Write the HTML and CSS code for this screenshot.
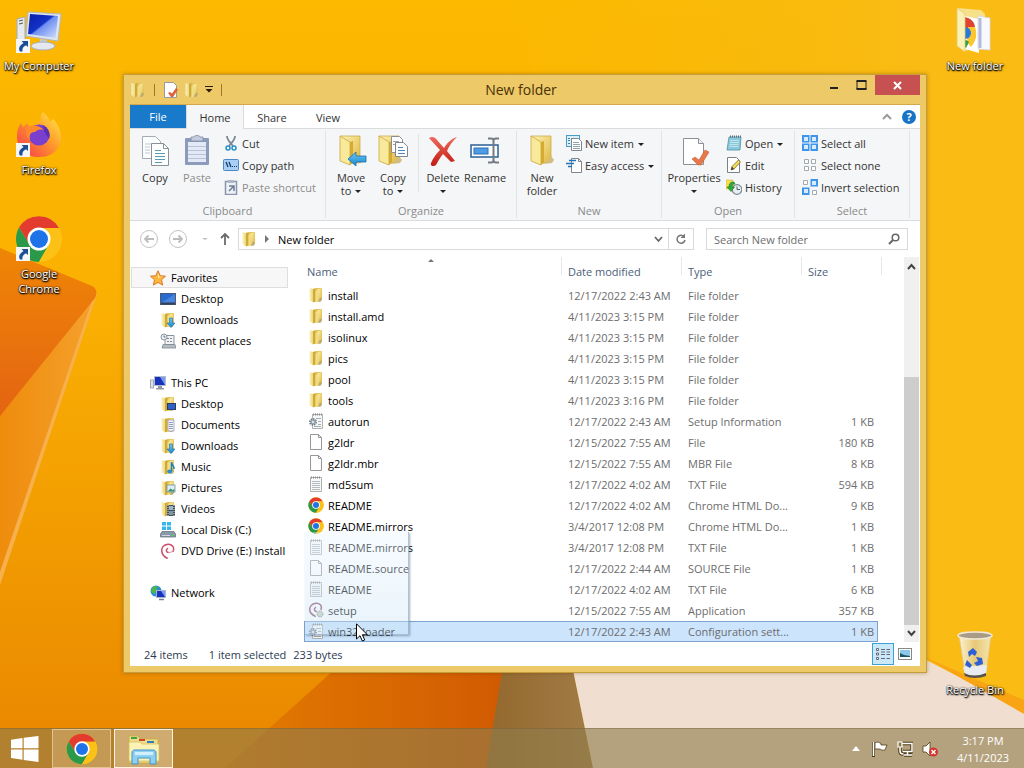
FILE: index.html
```html
<!DOCTYPE html>
<html lang="en">
<head>
  <meta charset="UTF-8">
  <title>New folder</title>
  <link rel="stylesheet" href="styles.css">
</head>
<body>

<!-- icon library -->
<svg class="defs" width="0" height="0" aria-hidden="true">
  <defs>
    <linearGradient id="gFolder" x1="0" y1="0" x2="1" y2="1">
      <stop offset="0" stop-color="#fdf3b8"/><stop offset="1" stop-color="#e0b73e"/>
    </linearGradient>
    <linearGradient id="gFront" x1="0" y1="0" x2="1" y2="0">
      <stop offset="0" stop-color="#fbf3bf"/><stop offset="1" stop-color="#ecd77a"/>
    </linearGradient>
    <linearGradient id="gScreen" x1="0" y1="0" x2="1" y2="1">
      <stop offset="0" stop-color="#0a1fa8"/><stop offset=".45" stop-color="#1232c8"/><stop offset=".5" stop-color="#6f8ff0"/><stop offset="1" stop-color="#d4e0ff"/>
    </linearGradient>
    <linearGradient id="gFox" x1="1" y1="0" x2="0" y2="1">
      <stop offset="0" stop-color="#fff04a"/><stop offset=".45" stop-color="#ff9a2a"/><stop offset="1" stop-color="#f5304e"/>
    </linearGradient>
    <linearGradient id="gArrow" x1="0" y1="0" x2="0" y2="1">
      <stop offset="0" stop-color="#6cc8f5"/><stop offset="1" stop-color="#1786cf"/>
    </linearGradient>
    <linearGradient id="gBin" x1="0" y1="0" x2="1" y2="0">
      <stop offset="0" stop-color="#fdf2cf"/><stop offset=".5" stop-color="#e6c877"/><stop offset="1" stop-color="#f6e3b0"/>
    </linearGradient>
    <linearGradient id="gDel" x1="0" y1="0" x2="0" y2="1">
      <stop offset="0" stop-color="#ee6a5c"/><stop offset="1" stop-color="#c01c14"/>
    </linearGradient>
  </defs>

  <symbol id="folder" viewBox="0 0 16 16">
    <path d="M6 3l2-2h6v12l-5 2H6z" fill="#e6c557"/>
    <path d="M9.500 2.500L13.500 1v11l-4 2z" fill="url(#gFolder)"/>
    <path d="M1.500 1L5 2v13.500L1.500 13z" fill="url(#gFront)"/>
    <path d="M5 2l2.500-1v13L5 15.500z" fill="#cfa93a"/>
    <path d="M7.500 4l2-1v12h-2z" fill="#f3df83"/>
    <path d="M12 10.500l2 1-1 3-3 .5z" fill="#b9aa78"/>
  </symbol>

  <symbol id="folder-big" viewBox="0 0 32 32">
    <path d="M5 2h20v26l-8 1z" fill="url(#gFolder)" stroke="#c5a33a" stroke-width=".7"/>
    <path d="M5 2l10 6v23L5 27z" fill="#f9e99a" stroke="#c9a83f" stroke-width=".8"/>
    <path d="M15 8l3-1v22l-3 2z" fill="#d5ab2f"/>
    <path d="M25 22l3 4-2 3-8 1z" fill="#d2bd7c"/>
  </symbol>

  <symbol id="page" viewBox="0 0 16 16">
    <path d="M2.500.5h8l3 3v12h-11z" fill="#fff" stroke="#979797"/>
    <path d="M10.500.5v3h3" fill="none" stroke="#979797"/>
  </symbol>

  <symbol id="txt" viewBox="0 0 16 16">
    <path d="M2.500 1.500h11v14h-11z" fill="#f7f8f8" stroke="#b0b0b0"/>
    <path d="M4 5.500h8M4 7.500h8M4 9.500h8M4 11.500h8M4 13.500h8" stroke="#b5bcc0"/>
    <path d="M3 1.500h10" stroke="#888" stroke-dasharray="1 1" stroke-width="2"/>
  </symbol>

  <symbol id="inf" viewBox="0 0 16 16">
    <path d="M4.500 1.500h10v14h-10z" fill="#f7f8f8" stroke="#b0b0b0"/>
    <path d="M5 1.500h9" stroke="#888" stroke-dasharray="1 1" stroke-width="2"/>
    <path d="M8 5.500h5M10 8.500h3M10 11.500h3M6 13.500h7" stroke="#a5adb3"/>
    <circle cx="5" cy="9" r="3" fill="#e4e8ea" stroke="#71808b" stroke-width="2" stroke-dasharray="1.400 .9"/>
    <circle cx="5" cy="9" r="2" fill="#dde2e5" stroke="#7c8993"/>
  </symbol>

  <symbol id="chrome" viewBox="0 0 48 48">
    <circle cx="24" cy="24" r="23" fill="#fbc116"/>
    <path d="M24 13h20A23 23 0 0 0 4 12.600L14.500 30z" fill="#e33b2e"/>
    <path d="M4 12.600A23 23 0 0 0 24 47l10-17.500-10 5.500-9.500-5.500z" fill="#2a9a4a"/>
    <path d="M24 47a23 23 0 0 0 20-34H24l10 16.500z" fill="#fbc116"/>
    <circle cx="24" cy="24" r="11.500" fill="#fff"/>
    <circle cx="24" cy="24" r="9" fill="#1f73e8"/>
  </symbol>

  <symbol id="debian" viewBox="0 0 16 16">
    <path d="M8.500 9.500C6.500 9.500 5.500 7 7.500 5.500M13 8.500c2-4-1-7.500-5-7.300C3.500 1.500 1.200 5 1.800 8.500c.5 3 2.700 5.500 5.400 6.700" fill="none" stroke="#c9506e" stroke-width="1.500" stroke-linecap="round"/>
    <path d="M8.500 9.500c2 0 4-.5 4.800-2" fill="none" stroke="#d98ba0" stroke-linecap="round"/>
  </symbol>

  <symbol id="debian-app" viewBox="0 0 16 16">
    <path d="M8.500 9.500C6.500 9.500 5.500 7 7.500 5.500M13 7.500c1.500-4-1.500-6.500-5-6.300C3.500 1.500 1.200 5 1.800 8.500c.5 3 2.700 4.500 5.400 5.700" fill="none" stroke="#94506c" stroke-width="1.500" stroke-linecap="round"/>
    <circle cx="12" cy="12" r="3" fill="#c9cfb4" stroke="#7d8b8b" stroke-dasharray="1.500 1"/>
  </symbol>

  <symbol id="star" viewBox="0 0 16 16">
    <path d="M8 .8l2.200 4.900 5.300.5-4 3.600 1.200 5.300L8 12.400l-4.700 2.700 1.200-5.300-4-3.600 5.300-.5z" fill="#fdb83c" stroke="#d9762a"/>
    <path d="M8 3l1.400 3.400 3 .4L8 8z" fill="#fee6a0"/>
  </symbol>

  <symbol id="desk" viewBox="0 0 16 16">
    <rect x=".5" y="2.500" width="15" height="11" fill="#2a6bd0" stroke="#4a5a78"/>
    <path d="M1 12L15 3v9z" fill="#5b97ea" opacity=".6"/>
    <path d="M1 12.500h14" stroke="#33415c" stroke-width="2"/>
  </symbol>

  <symbol id="f-down" viewBox="0 0 16 16">
    <use href="#folder" width="16" height="16"/>
    <path d="M9.500 6h3v5H15l-4 4.500L7 11h2.500z" fill="url(#gArrow)" stroke="#1a6fae" stroke-width=".6"/>
  </symbol>
  <symbol id="f-desk" viewBox="0 0 16 16">
    <use href="#folder" width="16" height="16"/>
    <rect x="7.500" y="7.500" width="8" height="6" fill="#2d62c8" stroke="#2b3b62"/>
  </symbol>
  <symbol id="f-docs" viewBox="0 0 16 16">
    <use href="#folder" width="16" height="16"/>
    <path d="M8 3h6v11H8z" fill="#f5f6fa" stroke="#8e94ac" stroke-width=".7"/>
    <path d="M9 5.500h4M9 7.500h4M9 9.500h4M9 11.500h4" stroke="#7882ad" stroke-width=".8"/>
  </symbol>
  <symbol id="f-music" viewBox="0 0 16 16">
    <use href="#folder" width="16" height="16"/>
    <path d="M11.500 12V3c0 3 3 3 2.500 7" fill="none" stroke="#1e7fbd" stroke-width="1.500"/>
    <ellipse cx="9.500" cy="12.500" rx="2.300" ry="2" fill="#2a90cc"/>
  </symbol>
  <symbol id="f-pics" viewBox="0 0 16 16">
    <use href="#folder" width="16" height="16"/>
    <rect x="7" y="5" width="8" height="7" fill="#d9eef5" stroke="#7a8d94" stroke-width=".8"/>
    <path d="M7.500 11.500l3-3 2 1.500 2-1v2.500z" fill="#3f8f72"/>
  </symbol>
  <symbol id="f-video" viewBox="0 0 16 16">
    <use href="#folder" width="16" height="16"/>
    <rect x="7" y="4" width="8" height="11" fill="#42505a"/>
    <rect x="9" y="5" width="4" height="4" fill="#9fb4c2"/><rect x="9" y="10" width="4" height="4" fill="#7d97a8"/>
    <path d="M8 4v11M14 4v11" stroke="#dfe4e6" stroke-dasharray="1 1"/>
  </symbol>

  <symbol id="recent" viewBox="0 0 16 16">
    <path d="M5 2.500h9v9H5z" fill="#f1f3f5" stroke="#88929c"/>
    <path d="M7 5.500h5M7 8.500h5" stroke="#7d8791" stroke-dasharray="2 1"/>
    <circle cx="4" cy="4" r="3" fill="#e8edf1" stroke="#8b97a3"/><path d="M4 2.500V4h1.500" stroke="#55606b" fill="none" stroke-width=".8"/>
    <path d="M3 11.500h12l1 3.500H2z" fill="#b5bcc4" stroke="#7f8992" stroke-width=".8"/>
  </symbol>

  <symbol id="pc" viewBox="0 0 16 16">
    <rect x=".5" y="5" width="3" height="8" fill="#dde1e8" stroke="#8e96a5" stroke-width=".8"/>
    <rect x="4.500" y="1.500" width="11" height="9" fill="#1733bd" stroke="#b4bccd"/>
    <path d="M10 2h5v8z" fill="#7c9af2"/>
    <path d="M8 11h4v2h2v1.500H6V13h2z" fill="#8f97a8"/>
  </symbol>

  <symbol id="disk" viewBox="0 0 16 16">
    <path d="M2 0h4v3.500H2zM7 0h4v3.500H7zM2 4.500h4V8H2zM7 4.500h4V8H7z" fill="#35b6ee"/>
    <path d="M2 9.500h12l1.500 2.500v3H.5v-3z" fill="#8a99a8" stroke="#5c6a78" stroke-width=".7"/>
    <path d="M2 13.500h8" stroke="#cfd7de"/><circle cx="13" cy="13.500" r="1" fill="#4cd053"/>
  </symbol>

  <symbol id="network" viewBox="0 0 16 16">
    <circle cx="6" cy="6" r="5.500" fill="#2a8fd0"/>
    <path d="M2 3c2-2 5-2 6-1L6 4l1 2-3 3-3-3z" fill="#4fb54c"/>
    <rect x="6.500" y="5.500" width="9" height="7" fill="#1733bd" stroke="#aab5cb"/>
    <path d="M11 6h4v6z" fill="#7c9af2"/><path d="M9 14.500h5" stroke="#76829a" stroke-width="1.500"/>
  </symbol>

  <!-- ribbon -->
  <symbol id="copy-big" viewBox="0 0 32 32">
    <path d="M3.500 2.500h13l5 5v17h-18z" fill="#fbfcfd" stroke="#a5abb0"/>
    <path d="M6 10h8M6 13h5M6 16h5M6 19h5" stroke="#c3cad0"/>
    <path d="M12.500 9.500h12l5 5v17h-17z" fill="#fff" stroke="#888f95"/>
    <path d="M24.500 9.500v5h5" fill="none" stroke="#888f95"/>
    <path d="M16 16.500h6M16 19.500h10M16 22.500h10M16 25.500h10M16 28.500h7" stroke="#5a99b5"/>
  </symbol>

  <symbol id="paste-big" viewBox="0 0 32 32">
    <rect x="4" y="4" width="24" height="27" rx="1" fill="#8d9bbb"/>
    <rect x="7" y="8" width="18" height="20" fill="#e3e9f5"/>
    <path d="M7 12.500h18M7 16.500h18M7 20.500h18M7 24.500h18" stroke="#b8c3da"/>
    <path d="M10 3h3c0-2 6-2 6 0h3v4H10z" fill="#c4cbda" stroke="#7f8ca8" stroke-width=".8"/>
  </symbol>

  <symbol id="move-big" viewBox="0 0 32 32">
    <use href="#folder-big" width="32" height="32"/>
    <path d="M13 25l8-7v4h10v6H21v4z" fill="url(#gArrow)" stroke="#1a6fae" stroke-width=".8"/>
  </symbol>

  <symbol id="copyto-big" viewBox="0 0 32 32">
    <use href="#folder-big" x="-3" width="32" height="32"/>
    <path d="M14.500 2.500h8l3 3v13h-11z" fill="#fff" stroke="#8a9096"/>
    <path d="M16 7.500h6M16 10.500h4" stroke="#9aa8b4"/>
    <path d="M18.500 8.500h8l4 4v10h-12z" fill="#fff" stroke="#7f868c"/>
    <path d="M21 13.500h5M21 16.500h7M21 19.500h7" stroke="#4a88c0"/>
  </symbol>

  <symbol id="delete-big" viewBox="0 0 32 32">
    <path d="M2 4c3-2 6-1 8 2l7 8c3-5 7-9 13-11-5 5-8 9-10 14l8 10-4 1-8-8c-3 4-5 7-7 11-3 2-6 1-5-2 2-5 5-9 9-13z" fill="url(#gDel)"/>
  </symbol>

  <symbol id="rename-big" viewBox="0 0 32 32">
    <rect x="2" y="11" width="27" height="12" fill="#fff" stroke="#2a5f94" stroke-width="1.500"/>
    <rect x="5" y="14" width="14" height="6" fill="#4f9be4" stroke="#2b70b8"/>
    <path d="M19 4.500h3c2 0 2.500.5 2.500 2V26c0 2-1 2.500-2.500 2.500h-3M30 4.500h-3c-2 0-2.500.5-2.500 2V26c0 2 1 2.500 2.500 2.500h3" fill="none" stroke="#747b83" stroke-width="2"/>
  </symbol>

  <symbol id="props-big" viewBox="0 0 32 32">
    <path d="M5.500 4.500h15l5 5v21h-20z" fill="#fff" stroke="#8a9096"/>
    <path d="M20.500 4.500v5h5" fill="#eef0f2" stroke="#8a9096"/>
    <path d="M14 25l3-2 4 3 6-10 4 2-8 13h-3z" fill="#e5794b" stroke="#cf5f35" stroke-width=".6"/>
  </symbol>

  <symbol id="cut" viewBox="0 0 16 16">
    <path d="M4 1c0 4 3 6 6 10M12 1c0 4-3 6-6 10" fill="none" stroke="#7d8894" stroke-width="1.800"/>
    <circle cx="5" cy="13" r="2" fill="none" stroke="#2791c7" stroke-width="1.500"/>
    <circle cx="11" cy="13" r="2" fill="none" stroke="#2791c7" stroke-width="1.500"/>
  </symbol>

  <symbol id="copypath" viewBox="0 0 16 16">
    <rect x=".5" y="2.500" width="15" height="11" rx="1" fill="#a9cff5" stroke="#4c87c6"/>
    <path d="M3 5l2 5M6 5l2 5" stroke="#163b66" stroke-width="1.300"/>
    <path d="M9 9.500h1M11 9.500h1M13 9.500h1" stroke="#163b66"/>
  </symbol>

  <symbol id="pasteshort" viewBox="0 0 16 16">
    <rect x="2.500" y="2.500" width="11" height="13" fill="#eef1f6" stroke="#8b96ac" stroke-width="1.500"/>
    <path d="M5 1h6v3H5z" fill="#aeb7c8"/>
    <path d="M6 7h5v5M11 7l-5 5" fill="none" stroke="#6e7b96" stroke-width="1.500"/>
  </symbol>

  <symbol id="newitem" viewBox="0 0 16 16">
    <rect x=".5" y=".5" width="13" height="11" fill="#dceefa" stroke="#4a9cc4"/>
    <path d="M2 3.500h4M2 5.500h3M2 8.500h3" stroke="#3b86ac" stroke-dasharray="2 1"/>
    <path d="M5.500 3.500h7l3 3v9h-10z" fill="#fff" stroke="#80878e"/>
    <path d="M7 7.500h6M7 9.500h7M7 11.500h7M7 13.500h7" stroke="#93a4b0"/>
  </symbol>

  <symbol id="easy" viewBox="0 0 16 16">
    <path d="M5.500 1.500h7l3 3v11h-10z" fill="#fff" stroke="#80878e"/>
    <path d="M12.500 1.500v3h3" fill="none" stroke="#80878e"/>
    <path d="M3 3.500h7M0 6.500h8M2 9.500h4" stroke="#2475b8" stroke-width="1.500"/>
  </symbol>

  <symbol id="notepad" viewBox="0 0 16 16">
    <path d="M3 2h12l-1 13H1z" fill="#8cc8dc" stroke="#4f8fa6" stroke-width=".8"/>
    <path d="M4 5.500h9M4 7.500h9M3.500 9.500h9M3.500 11.500h9" stroke="#bfe3ed"/>
    <path d="M4 1.500h11" stroke="#5f7078" stroke-width="2" stroke-dasharray="1 1"/>
  </symbol>

  <symbol id="edit" viewBox="0 0 16 16">
    <path d="M1.500.5h9l3 3v12h-12z" fill="#fff" stroke="#7b8188"/>
    <path d="M5 13l1-3.500 6.500-6.500 2 2L8 12z" fill="#f2dc5e" stroke="#7c6a2a" stroke-width=".8"/>
    <path d="M5 13l1-3.500L8 12z" fill="#3c3c3c"/>
  </symbol>

  <symbol id="history" viewBox="0 0 16 16">
    <path d="M0 1h7v9H0z" fill="#f4dd55" stroke="#cbb02f" stroke-width=".5"/>
    <circle cx="11" cy="10.500" r="4.800" fill="#e9eef3" stroke="#7b8794" stroke-width="1.200"/>
    <path d="M11 7.500v3h3" fill="none" stroke="#555f6a"/>
    <path d="M8 3C4 3 3 5 3 8H1l4 4.500L8.500 8H6c0-2 .5-3 3-3z" fill="#2cab38" stroke="#177a25" stroke-width=".6"/>
  </symbol>

  <symbol id="selall" viewBox="0 0 16 16">
    <path d="M0 0h7.500v7.500H0zM8.500 0H16v7.500H8.500zM0 8.500h7.500V16H0zM8.500 8.500H16V16H8.500z" fill="#3f95ea"/>
    <path d="M2 2h4v4H2zM10 2h4v4h-4zM2 10h4v4H2zM10 10h4v4h-4z" fill="#d8ecff"/>
  </symbol>
  <symbol id="selnone" viewBox="0 0 16 16">
    <path d="M2.500 2.500h4v4h-4zM9.500 2.500h4v4h-4zM2.500 9.500h4v4h-4zM9.500 9.500h4v4h-4z" fill="#fff" stroke="#a4a9ae"/>
  </symbol>
  <symbol id="selinv" viewBox="0 0 16 16">
    <path d="M8.500 0H16v7.500H8.500zM0 8.500h7.500V16H0z" fill="#3f95ea"/>
    <path d="M10 2h4v4h-4zM2 10h4v4H2z" fill="#d8ecff"/>
    <path d="M1.500 1.500h4v4h-4zM10.500 11.500h4v4h-4z" fill="#fff" stroke="#a4a9ae"/>
  </symbol>

  <symbol id="qprops" viewBox="0 0 16 16">
    <path d="M1.500.5h9l3 3v12h-12z" fill="#fff" stroke="#9a9a9a"/>
    <path d="M5 11l2-1 2 1.500L13 6l2 1.500-5 7.500H8z" fill="#e0613a"/>
  </symbol>

  <symbol id="shortcut" viewBox="0 0 14 14">
    <path d="M0 0h14v14H0z" fill="#f4f6f8"/>
    <path d="M5.500 2H12v6l-2-1.700C7 8 6 9.500 6.500 12.500H4C2 9.500 3.500 6.500 7.500 4z" fill="#1c4f94"/>
  </symbol>
</svg>

<svg class="wallpaper" viewBox="0 0 1024 768" preserveAspectRatio="none" aria-hidden="true">
  <defs>
    <linearGradient id="wBase" x1="0" y1="0" x2="0" y2="1">
      <stop offset="0" stop-color="#fcb900"/><stop offset=".4" stop-color="#fab002"/><stop offset="1" stop-color="#e98600"/>
    </linearGradient>
    <linearGradient id="wFold" x1="0" y1="0" x2="0" y2="1">
      <stop offset="0" stop-color="#ef8606"/><stop offset="1" stop-color="#e46412"/>
    </linearGradient>
    <linearGradient id="wUnder" x1="0" y1="0" x2="1" y2="0">
      <stop offset="0" stop-color="#ee8c0c"/><stop offset="1" stop-color="#f5a02c"/>
    </linearGradient>
    <linearGradient id="wDark" x1="0" y1="0" x2="1" y2="0">
      <stop offset="0" stop-color="#e47c00"/><stop offset="1" stop-color="#d05a02"/>
    </linearGradient>
    <linearGradient id="wBrown" x1="0" y1="0" x2="1" y2="0">
      <stop offset="0" stop-color="#94682e"/><stop offset="1" stop-color="#a17c46"/>
    </linearGradient>
    <linearGradient id="wRight" x1="0" y1="0" x2="1" y2="0">
      <stop offset="0" stop-color="#f9bb0c" stop-opacity="0"/><stop offset="1" stop-color="#f9bb14"/>
    </linearGradient>
  </defs>
  <path d="M0 0h1024v768H0z" fill="url(#wBase)"/>
  <path d="M500 0h424v768H860z" fill="url(#wRight)"/>
  <path d="M924 0h100v768H860z" fill="#f9bb14"/>
  <path d="M0 300L97 294L0 585z" fill="#f7b04e"/>
  <path d="M0 310L93 298L0 572z" fill="url(#wUnder)"/>
  <path d="M0 248L92 286Q99 290 95 298L0 416z" fill="url(#wFold)"/>
  <path d="M345 660h160L488 768H225z" fill="url(#wDark)"/>
  <path d="M504 660h67l22 108H486z" fill="url(#wBrown)"/>
  <path d="M571 660h355l98 50v58H593z" fill="#f0dfd0"/>
  <path d="M922 656l102 44v14z" fill="#f8a414"/>
</svg>

<main class="desktop">
  <div class="icons left">
    <a class="shortcut" href="#">
      <svg class="pic" viewBox="0 0 48 48">
        <path d="M2 12l8-2v26l-8-3z" fill="#e6e9ee" stroke="#a5acb6"/><path d="M4 14l4-1M4 17l4-1" stroke="#555"/>
        <path d="M13 5l33 2-3 27-32-5z" fill="#dfe5ee" stroke="#b0b8c5"/>
        <path d="M15 7l28 2-2.500 22L13 27z" fill="url(#gScreen)"/>
        <path d="M25 32l7 1v5h-7z" fill="#c5cad3"/><ellipse cx="28" cy="39" rx="12" ry="4" fill="#e5e9ef" stroke="#a8afba"/>
        <use href="#shortcut" x="1" y="32" width="14" height="14"/>
      </svg>
      <span>My Computer</span>
    </a>
    <a class="shortcut" href="#">
      <svg class="pic" viewBox="0 0 48 48">
        <path d="M28 1c4 3 6 6 7 10l3-3c7 7 10 17 7 25-4 10-12 13-21 13C11 46 2 38 2 26c0-6 1-10 4-14l2 4 4-4 3 4c4-2 8-3 10-5 1-4 0-7 3-10z" fill="url(#gFox)"/>
        <circle cx="24" cy="24" r="10.500" fill="#7b3fd0"/>
        <path d="M13 16c6-3 12-1 16 3-5-1-7 0-9 2-4 0-6 2-5 8-5-5-5-9-2-13z" fill="#ff8a2c"/>
        <path d="M28 14c5 3 8 8 6 14l-5-8z" fill="#5b2fb2"/>
        <use href="#shortcut" x="1" y="32" width="14" height="14"/>
      </svg>
      <span>Firefox</span>
    </a>
    <a class="shortcut" href="#">
      <svg class="pic" viewBox="0 0 48 48">
        <use href="#chrome" width="48" height="48"/>
        <use href="#shortcut" x="1" y="32" width="14" height="14"/>
      </svg>
      <span>Google Chrome</span>
    </a>
  </div>

  <div class="icons right">
    <a class="shortcut" href="#">
      <svg class="pic" viewBox="0 0 48 48">
        <path d="M6 1l24 2 4 4v32l-20 5z" fill="#f6e08a"/>
        <path d="M14 9l14 3v34l-14-4z" fill="#fff"/>
        <path d="M13 10c7 1 11 5 11 11H13z" fill="#dd4434"/><path d="M17 20h7c3 9 0 15-4 20l-4-5z" fill="#fbc62e"/><circle cx="14" cy="26" r="6" fill="#2a78dc"/><path d="M12 31l6 4-3 6-4-3z" fill="#2f9e4c"/>
        <path d="M27 9l12 2v32l-12-1z" fill="#f9f9fd" stroke="#d3d6e2" stroke-width=".8"/><path d="M29 11v30" stroke="#b3bbdc" stroke-width="3"/>
        <path d="M6 1l8 6v38l-8-6z" fill="#fbf0b5" stroke="#e2cc74" stroke-width=".8"/>
      </svg>
      <span>New folder</span>
    </a>
    <a class="shortcut bin" href="#">
      <svg class="pic" viewBox="0 0 48 48">
        <path d="M8 4l32 0-5 38q-10 6-21 0z" fill="url(#gBin)" stroke="#dcc99a" stroke-width=".8"/>
        <path d="M12 36l24-2-1 9q-10 5-21 0z" fill="#e8ebf0"/>
        <path d="M13 42q10 5 22 0v3q-11 4-21 0z" fill="#55524c"/>
        <ellipse cx="24" cy="4.500" rx="17" ry="3.500" fill="#a89c86" stroke="#efe8d4" stroke-width="1.500"/>
        <path d="M17 21l5-4 4 4-2 4-3-2-3 3zM16 29l5 5-2 3-5-3zM25 26l6 1 1 6-6 2-3-3 4-2z" fill="#2d5fd6"/>
      </svg>
      <span>Recycle Bin</span>
    </a>
  </div>

  <section class="window">
    <header class="titlebar">
      <div class="quick">
        <svg class="ic"><use href="#folder"/></svg>
        <i class="bar"></i>
        <button title="Properties"><svg class="ic"><use href="#qprops"/></svg></button>
        <button title="New folder"><svg class="ic"><use href="#folder"/></svg></button>
        <button title="Customize"><svg width="8" height="8" viewBox="0 0 8 8"><path d="M0 .5h8" stroke="#2b1a00"/><path d="M.5 3h7L4 6.500z" fill="#2b1a00"/></svg></button>
        <i class="bar"></i>
      </div>
      <h1>New folder</h1>
      <div class="caption">
        <button title="Minimize"><svg width="11" height="11" viewBox="0 0 11 11"><path d="M1 8h8" stroke="#222" stroke-width="2"/></svg></button>
        <button title="Maximize"><svg width="11" height="11" viewBox="0 0 11 11"><path d="M.5 1h10M.5 9h10" stroke="#222" stroke-width="2"/><path d="M1 1v8M10 1v8" stroke="#222"/></svg></button>
        <button class="close" title="Close"><svg width="9" height="9" viewBox="0 0 9 9"><path d="M1 1l7 7M8 1L1 8" stroke="#fff" stroke-width="2"/></svg></button>
      </div>
    </header>

    <div class="client">
      <nav class="tabs">
        <button class="file">File</button>
        <button class="on">Home</button>
        <button>Share</button>
        <button>View</button>
        <div class="tab-end">
          <svg width="10" height="7" viewBox="0 0 10 7"><path d="M1 6l4-4 4 4" fill="none" stroke="#9a9a9a" stroke-width="2"/></svg>
          <button class="help" title="Help">?</button>
        </div>
      </nav>

      <div class="ribbon">
        <div class="group g-clip">
          <div class="tools">
            <button class="big"><svg><use href="#copy-big"/></svg>Copy</button>
            <button class="big off"><svg><use href="#paste-big"/></svg>Paste</button>
            <div class="small">
              <button><svg class="ic"><use href="#cut"/></svg>Cut</button>
              <button><svg class="ic"><use href="#copypath"/></svg>Copy path</button>
              <button class="off"><svg class="ic"><use href="#pasteshort"/></svg>Paste shortcut</button>
            </div>
          </div>
          <p>Clipboard</p>
        </div>
        <div class="group g-org">
          <div class="tools">
            <button class="big"><svg><use href="#move-big"/></svg>Move<span class="arr">to</span></button>
            <button class="big"><svg><use href="#copyto-big"/></svg>Copy<span class="arr">to</span></button>
            <i class="split"></i>
            <button class="big"><svg><use href="#delete-big"/></svg>Delete<span class="arr"></span></button>
            <button class="big"><svg><use href="#rename-big"/></svg>Rename</button>
          </div>
          <p>Organize</p>
        </div>
        <div class="group g-new">
          <div class="tools">
            <button class="big"><svg><use href="#folder-big"/></svg>New<span>folder</span></button>
            <div class="small">
              <button><svg class="ic"><use href="#newitem"/></svg><span class="arr">New item</span></button>
              <button><svg class="ic"><use href="#easy"/></svg><span class="arr">Easy access</span></button>
            </div>
          </div>
          <p>New</p>
        </div>
        <div class="group g-open">
          <div class="tools">
            <button class="big wide"><svg><use href="#props-big"/></svg>Properties<span class="arr"></span></button>
            <div class="small">
              <button><svg class="ic"><use href="#notepad"/></svg><span class="arr">Open</span></button>
              <button><svg class="ic"><use href="#edit"/></svg>Edit</button>
              <button><svg class="ic"><use href="#history"/></svg>History</button>
            </div>
          </div>
          <p>Open</p>
        </div>
        <div class="group g-sel">
          <div class="tools">
            <div class="small">
              <button><svg class="ic"><use href="#selall"/></svg>Select all</button>
              <button><svg class="ic"><use href="#selnone"/></svg>Select none</button>
              <button><svg class="ic"><use href="#selinv"/></svg>Invert selection</button>
            </div>
          </div>
          <p>Select</p>
        </div>
      </div>

      <div class="address">
        <button class="round" title="Back"><svg width="20" height="20" viewBox="0 0 20 20"><circle cx="10" cy="10" r="8.500" fill="#fff" stroke="#c3c3c3"/><path d="M15 10H6M9.500 6.500L6 10l3.500 3.500" fill="none" stroke="#bcbcbc" stroke-width="1.800"/></svg></button>
        <button class="round" title="Forward"><svg width="20" height="20" viewBox="0 0 20 20"><circle cx="10" cy="10" r="8.500" fill="#fff" stroke="#c3c3c3"/><path d="M5 10h9M10.500 6.500L14 10l-3.500 3.500" fill="none" stroke="#bcbcbc" stroke-width="1.800"/></svg></button>
        <button class="recent" title="Recent locations"><svg width="6" height="4" viewBox="0 0 6 4"><path d="M0 1h6L3 3z" fill="#c0c0c0"/></svg></button>
        <button class="up" title="Up"><svg width="12" height="14" viewBox="0 0 12 14"><path d="M6 13V2M2 6l4-4 4 4" fill="none" stroke="#6c6c6c" stroke-width="1.800"/></svg></button>
        <div class="path">
          <svg class="ic"><use href="#folder"/></svg>
          <svg width="5" height="8" viewBox="0 0 5 8"><path d="M0 0l4 4-4 4z" fill="#777"/></svg>
          <a href="#">New folder</a>
          <button class="drop" title="Previous locations"><svg width="9" height="7" viewBox="0 0 9 7"><path d="M1 1l3.500 4L8 1" fill="none" stroke="#666" stroke-width="1.800"/></svg></button>
          <button class="refresh" title="Refresh"><svg width="12" height="12" viewBox="0 0 12 12"><path d="M9 3.500A4 4 0 1 0 10 7" fill="none" stroke="#777" stroke-width="1.500"/><path d="M10 .5V5H5.500z" fill="#777"/></svg></button>
        </div>
        <div class="search">
          <input type="search" aria-label="Search New folder" placeholder="Search New folder">
          <svg width="12" height="12" viewBox="0 0 12 12"><circle cx="7.500" cy="4.500" r="3.300" fill="none" stroke="#666" stroke-width="1.500"/><path d="M5 7l-4 4" stroke="#666" stroke-width="2"/></svg>
        </div>
      </div>

      <div class="body">
        <nav class="tree">
          <a class="top sel" href="#"><svg class="ic"><use href="#star"/></svg>Favorites</a>
          <a href="#"><svg class="ic"><use href="#desk"/></svg>Desktop</a>
          <a href="#"><svg class="ic"><use href="#f-down"/></svg>Downloads</a>
          <a href="#"><svg class="ic"><use href="#recent"/></svg>Recent places</a>
          <a class="top gap" href="#"><svg class="ic"><use href="#pc"/></svg>This PC</a>
          <a href="#"><svg class="ic"><use href="#f-desk"/></svg>Desktop</a>
          <a href="#"><svg class="ic"><use href="#f-docs"/></svg>Documents</a>
          <a href="#"><svg class="ic"><use href="#f-down"/></svg>Downloads</a>
          <a href="#"><svg class="ic"><use href="#f-music"/></svg>Music</a>
          <a href="#"><svg class="ic"><use href="#f-pics"/></svg>Pictures</a>
          <a href="#"><svg class="ic"><use href="#f-video"/></svg>Videos</a>
          <a href="#"><svg class="ic"><use href="#disk"/></svg>Local Disk (C:)</a>
          <a href="#"><svg class="ic"><use href="#debian"/></svg>DVD Drive (E:) Install</a>
          <a class="top gap" href="#"><svg class="ic"><use href="#network"/></svg>Network</a>
        </nav>

        <div class="list">
          <table>
            <colgroup><col><col class="c-date"><col class="c-type"><col class="c-size"></colgroup>
            <thead>
              <tr><th class="sorted">Name</th><th>Date modified</th><th>Type</th><th>Size</th></tr>
            </thead>
            <tbody>
              <tr><td><svg class="ic"><use href="#folder"/></svg>install</td><td>12/17/2022 2:43 AM</td><td>File folder</td><td></td></tr>
              <tr><td><svg class="ic"><use href="#folder"/></svg>install.amd</td><td>4/11/2023 3:15 PM</td><td>File folder</td><td></td></tr>
              <tr><td><svg class="ic"><use href="#folder"/></svg>isolinux</td><td>4/11/2023 3:15 PM</td><td>File folder</td><td></td></tr>
              <tr><td><svg class="ic"><use href="#folder"/></svg>pics</td><td>4/11/2023 3:15 PM</td><td>File folder</td><td></td></tr>
              <tr><td><svg class="ic"><use href="#folder"/></svg>pool</td><td>4/11/2023 3:15 PM</td><td>File folder</td><td></td></tr>
              <tr><td><svg class="ic"><use href="#folder"/></svg>tools</td><td>4/11/2023 3:16 PM</td><td>File folder</td><td></td></tr>
              <tr><td><svg class="ic"><use href="#inf"/></svg>autorun</td><td>12/17/2022 2:43 AM</td><td>Setup Information</td><td>1 KB</td></tr>
              <tr><td><svg class="ic"><use href="#page"/></svg>g2ldr</td><td>12/15/2022 7:55 AM</td><td>File</td><td>180 KB</td></tr>
              <tr><td><svg class="ic"><use href="#page"/></svg>g2ldr.mbr</td><td>12/15/2022 7:55 AM</td><td>MBR File</td><td>8 KB</td></tr>
              <tr><td><svg class="ic"><use href="#txt"/></svg>md5sum</td><td>12/17/2022 4:02 AM</td><td>TXT File</td><td>594 KB</td></tr>
              <tr><td><svg class="ic"><use href="#chrome"/></svg>README</td><td>12/17/2022 4:02 AM</td><td>Chrome HTML Do...</td><td>9 KB</td></tr>
              <tr><td><svg class="ic"><use href="#chrome"/></svg>README.mirrors</td><td>3/4/2017 12:08 PM</td><td>Chrome HTML Do...</td><td>1 KB</td></tr>
              <tr><td><svg class="ic"><use href="#txt"/></svg>README.mirrors</td><td>3/4/2017 12:08 PM</td><td>TXT File</td><td>1 KB</td></tr>
              <tr><td><svg class="ic"><use href="#page"/></svg>README.source</td><td>12/17/2022 2:44 AM</td><td>SOURCE File</td><td>1 KB</td></tr>
              <tr><td><svg class="ic"><use href="#txt"/></svg>README</td><td>12/17/2022 4:02 AM</td><td>TXT File</td><td>6 KB</td></tr>
              <tr><td><svg class="ic"><use href="#debian-app"/></svg>setup</td><td>12/15/2022 7:55 AM</td><td>Application</td><td>357 KB</td></tr>
              <tr class="picked"><td><svg class="ic"><use href="#inf"/></svg>win32-loader</td><td>12/17/2022 2:43 AM</td><td>Configuration sett...</td><td>1 KB</td></tr>
            </tbody>
          </table>
          <div class="ghost"></div>
          <svg class="cursor" width="12" height="19" viewBox="0 0 12 19"><path d="M.5.800v15.200l3.500-3.300 2.300 5.300 2.400-1-2.300-5.200h5z" fill="#fff" stroke="#000"/></svg>
        </div>

        <div class="scroll">
          <svg width="9" height="7" viewBox="0 0 9 7"><path d="M1 6l3.500-4L8 6" fill="none" stroke="#444" stroke-width="2"/></svg>
          <div class="track"><div class="thumb"></div></div>
          <svg width="9" height="7" viewBox="0 0 9 7"><path d="M1 1l3.500 4L8 1" fill="none" stroke="#444" stroke-width="2"/></svg>
        </div>
      </div>

      <footer class="status">
        <span class="count">24 items</span>
        <span>1 item selected</span>
        <span>233 bytes</span>
        <div class="views">
          <button class="on" title="Details"><svg width="16" height="14" viewBox="0 0 16 14"><path d="M1.500 1.500h2v2h-2zM1.500 6h2v2h-2zM1.500 10.500h2v2h-2z" fill="#fff" stroke="#667"/><path d="M6 2.500h4M11.500 2.500H15M6 5h4M11.500 5H15M6 7.500h4M11.500 7.500H15M6 11.500h4M11.500 11.500H15" stroke="#667"/></svg></button>
          <button title="Large icons"><svg width="14" height="12" viewBox="0 0 14 12"><rect x=".5" y=".5" width="13" height="11" fill="#fff" stroke="#888"/><path d="M2 2h10v7H2z" fill="#8cc8e8"/><path d="M2 9V5l4 2 6 1v1z" fill="#1f5560"/></svg></button>
        </div>
      </footer>
    </div>
  </section>
</main>

<footer class="taskbar">
  <button class="start" title="Start"><svg width="28" height="26" viewBox="0 0 28 26"><path d="M0 3.800L11.500 2v10.300H0zM12.700 1.800L27.500 0v12.300H12.700zM0 13.500h11.500v10.300L0 22zM12.700 13.500h14.800V26l-14.800-2z" fill="#fff"/></svg></button>
  <button class="task" title="Google Chrome"><svg width="32" height="32"><use href="#chrome"/></svg></button>
  <button class="task active" title="File Explorer">
    <svg width="34" height="32" viewBox="0 0 34 32">
      <path d="M2 3h9l2 3h18v24H2z" fill="#efdc86" stroke="#c9b04c"/>
      <path d="M4 4h6v2H4z" fill="#3f9f4a"/><path d="M12 6h6v2h-6z" fill="#d8402c"/><path d="M20 8h7v2h-7z" fill="#2d7ec4"/>
      <path d="M2 9h11l2 2h17v17H2z" fill="#fbf2b8" stroke="#d6c068" stroke-width=".8"/>
      <path d="M5 31V20c0-2 1-3 3-3h18c2 0 3 1 3 3v11h-6v-6H11v6z" fill="#8fd0f2" stroke="#3f93c8"/>
      <path d="M8 19h18v3H8z" fill="#d2effc"/>
    </svg>
  </button>
  <div class="tray">
    <svg width="8" height="5" viewBox="0 0 8 5"><path d="M4 0l4 5H0z" fill="#fff"/></svg>
    <svg width="16" height="16" viewBox="0 0 16 16"><path d="M1.500 1v15" stroke="#4c3c18" stroke-width="3"/><path d="M3 1.500c3-1 4 0 6 1v1.500h6l-2 5c-3 1-4-1-6-1H3z" fill="#fff" stroke="#4c3c18" stroke-width=".8"/><path d="M1.500 1v14" stroke="#fff" stroke-width="1.500"/></svg>
    <svg width="16" height="16" viewBox="0 0 16 16"><path d="M5 2.500h10v8H6M10.500 10.500v4M7 14h8M3 6v4c0 2 1 3 3 3" fill="none" stroke="#4c3c18" stroke-width="3.500"/><path d="M5 2.500h10v8H6M10.500 10.500v4M7 14h8M3 6v4c0 2 1 3 3 3" fill="none" stroke="#fff" stroke-width="1.500"/><path d="M1 1h4v5H1z" fill="#8f7a48" stroke="#fff" stroke-width="1.200"/></svg>
    <svg width="17" height="16" viewBox="0 0 17 16"><path d="M1 5h3l4-4v14l-4-4H1z" fill="#fff" stroke="#4c3c18" stroke-width=".8"/><circle cx="11.500" cy="11" r="4.500" fill="#d3342c"/><path d="M9.500 9l4 4M13.500 9l-4 4" stroke="#fff" stroke-width="1.500"/></svg>
  </div>
  <time class="clock">3:17 PM<br>4/11/2023</time>
</footer>

</body>
</html>
```
FILE: styles.css
```css
* {
  box-sizing: border-box;
}
body {
  margin: 0;
  min-height: 100vh;
  display: flex;
  flex-direction: column;
  overflow: hidden;
  font: 11px/15px "Open Sans", "Noto Sans", sans-serif;
  color: #000;
}
button {
  font: inherit;
  color: inherit;
  background: none;
  border: 0;
  padding: 0;
}
a {
  color: inherit;
  text-decoration: none;
}
i {
  display: block;
}
svg {
  display: block;
  flex: none;
}
.ic {
  width: 16px;
  height: 16px;
}
.defs {
  position: absolute;
}
.wallpaper {
  position: absolute;
  width: 100%;
  height: 100%;
  z-index: -1;
}

/* desktop */
.desktop {
  flex: 1;
  position: relative;
  display: flex;
  justify-content: space-between;
}
.icons {
  display: grid;
  grid-auto-rows: 104px;
  align-content: start;
}
.right {
  margin-right: 10px;
}
.shortcut {
  width: 78px;
  padding-top: 7px;
  display: flex;
  flex-direction: column;
  align-items: center;
  gap: 3px;
  text-align: center;
  color: #fff;
  text-shadow: 0 1px 1px #000, 1px 1px 2px #000, 0 0 2px #000;
}
.shortcut span {
  max-width: 76px;
}
.pic {
  width: 48px;
  height: 48px;
}
.bin {
  grid-row: 7;
}

/* window */
.window {
  position: absolute;
  left: 123px;
  right: 97px;
  top: 74px;
  padding: 0 6px 6px;
  background: #edc967;
  border: 1px solid #c79d3c;
  box-shadow: 0 0 4px rgba(90, 60, 0, 0.4);
}
.titlebar {
  height: 29px;
  display: flex;
  align-items: center;
}
.titlebar h1 {
  flex: 1;
  margin: 0;
  padding-right: 4px;
  text-align: center;
  font-size: 14px;
  font-weight: normal;
  color: #4a3208;
}
.quick {
  display: flex;
  align-items: center;
  gap: 5px;
}
.quick .bar {
  width: 1px;
  height: 12px;
  margin: 0 3px;
  background: #a8742c;
}
.caption {
  align-self: flex-start;
  display: flex;
}
.caption button {
  width: 27px;
  height: 20px;
  display: flex;
  align-items: center;
  justify-content: center;
}
.caption .close {
  width: 45px;
  background: #c75050;
}
.client {
  background: #fff;
  border: 1px solid #d3a94a;
  border-width: 1px 0 0;
}

/* tabs */
.tabs {
  display: flex;
  height: 24px;
  border-bottom: 1px solid #dadbdc;
  color: #333;
}
.tabs > button {
  width: 56px;
  height: 24px;
}
.tabs .file {
  height: 23px;
  color: #fff;
  background: #1979ca;
}
.tabs .on {
  width: 58px;
  background: #f5f6f7;
  border: 1px solid #dadbdc;
  border-width: 0 1px;
}
.tab-end {
  margin-left: auto;
  padding-right: 4px;
  display: flex;
  align-items: center;
  gap: 10px;
}
.help {
  width: 14px;
  height: 14px;
  border-radius: 50%;
  background: #1673c5;
  color: #fff;
  font-weight: bold;
  line-height: 14px;
}

/* ribbon */
.ribbon {
  display: flex;
  height: 92px;
  padding: 2px 0;
  background: #f5f6f7;
  border-bottom: 1px solid #dadbdc;
  color: #333;
}
.group {
  display: flex;
  flex-direction: column;
  justify-content: space-between;
  border-right: 1px solid #e2e3e4;
}
.group p {
  margin: 0;
  text-align: center;
  color: #8a8a8a;
}
.tools {
  display: flex;
  padding: 1px 4px 0;
}
.g-clip { width: 196px; }
.g-org { width: 191px; }
.g-new { width: 145px; }
.g-open { width: 133px; }
.g-sel { width: 115px; }
.big {
  min-width: 42px;
  height: 66px;
  display: flex;
  flex-direction: column;
  align-items: center;
  line-height: 13px;
  white-space: nowrap;
}
.big svg {
  width: 32px;
  height: 32px;
  margin: 2px 0 5px;
}
.big.wide {
  min-width: 56px;
}
.off {
  color: #8d8d8d;
}
.split {
  width: 1px;
  height: 58px;
  margin: 2px 3px 0 4px;
  background: #e2e3e4;
}
.arr::after {
  content: "";
  display: inline-block;
  margin-left: 4px;
  vertical-align: 2px;
  border: 3px solid transparent;
  border-top-color: #222;
  border-bottom: 0;
}
.arr:empty::after {
  margin-left: 0;
}
.small {
  padding-left: 4px;
}
.g-clip .small {
  padding-left: 5px;
}
.g-new .small, .g-sel .small {
  padding-left: 3px;
}
.small button {
  height: 22px;
  display: flex;
  align-items: center;
  gap: 3px;
  white-space: nowrap;
}

/* address row */
.address {
  display: flex;
  align-items: center;
  height: 36px;
  padding: 0 12px 0 9px;
}
.round {
  margin-right: 9px;
}
.recent, .up {
  display: flex;
}
.recent {
  margin: 0 11px 0 5px;
}
.up {
  margin-right: 7px;
}
.path {
  flex: 1;
  height: 22px;
  display: flex;
  align-items: center;
  border: 1px solid #d9d9d9;
  padding-left: 2px;
}
.path > svg + svg {
  margin: 0 8px;
}
.drop {
  margin-left: auto;
  padding: 0 5px;
}
.refresh {
  height: 20px;
  padding: 0 6px;
  border-left: 1px solid #d9d9d9;
}
.search {
  width: 202px;
  height: 22px;
  margin-left: 12px;
  padding: 0 7px;
  display: flex;
  align-items: center;
  border: 1px solid #d9d9d9;
}
.search input {
  flex: 1;
  min-width: 0;
  border: 0;
  padding: 0;
  font: inherit;
}
.search input::placeholder {
  color: #6d6d6d;
}

/* folder tree */
.body {
  display: flex;
}
.tree {
  width: 158px;
  padding: 10px 0 0 1px;
  overflow: hidden;
}
.tree a {
  display: flex;
  align-items: center;
  gap: 5px;
  height: 21px;
  padding-left: 29px;
  white-space: nowrap;
}
.tree .top {
  padding-left: 19px;
}
.tree .sel {
  padding-left: 18px;
  background: #f7f7f7;
  border: 1px solid #dedede;
}
.tree .gap {
  margin-top: 21px;
}

/* file list */
.list {
  flex: 1;
  position: relative;
  padding: 0 26px 0 16px;
}
table {
  width: 100%;
  table-layout: fixed;
  border-collapse: separate;
  border-spacing: 0;
}
.c-date, .c-type {
  width: 120px;
}
.c-size {
  width: 76px;
}
th {
  position: relative;
  height: 28px;
  padding: 0 6px;
  text-align: left;
  font-weight: normal;
  color: #4c607a;
}
th:first-child {
  padding-left: 3px;
}
th::after {
  content: "";
  position: absolute;
  right: 0;
  top: 0;
  width: 1px;
  height: 18px;
  background: #e8e8e8;
}
th:last-child::after {
  right: -4px;
}
.sorted::before {
  content: "";
  position: absolute;
  left: 48%;
  top: 2px;
  border: 3px solid transparent;
  border-bottom-color: #777;
  border-top: 0;
}
td {
  height: 21px;
  padding: 0 6px;
  border: 1px solid transparent;
  border-width: 1px 0;
  line-height: 19px;
  white-space: nowrap;
  color: #6d6d6d;
}
td:first-child {
  padding-left: 4px;
  color: #000;
}
td:last-child {
  padding-right: 4px;
  text-align: right;
}
td .ic {
  float: left;
  margin: 1px 4px 0 0;
}
.picked td {
  background: #cce4fc;
  border-color: #7da2ce;
}
.picked td:first-child {
  border-left: 1px solid #7da2ce;
  padding-left: 3px;
}
.picked td:last-child {
  border-right: 1px solid #7da2ce;
  padding-right: 3px;
}

/* drag image and pointer */
.ghost {
  position: absolute;
  left: 17px;
  top: 275px;
  width: 104px;
  height: 103px;
  background: linear-gradient(rgba(235, 246, 254, 0.4), rgba(200, 226, 246, 0.4));
  border: 1px solid rgba(130, 160, 185, 0.6);
  border-width: 0 1px 1px 0;
  box-shadow: 1px 1px 2px rgba(80, 100, 120, 0.5);
}
.cursor {
  position: absolute;
  left: 68px;
  top: 366px;
}

/* scroll bar */
.scroll {
  width: 15px;
  margin-right: 1px;
  padding: 6px 0 5px;
  display: flex;
  flex-direction: column;
  align-items: center;
  gap: 5px;
  background: #f0f0f0;
}
.track {
  flex: 1;
  width: 100%;
  display: flex;
  align-items: flex-end;
}
.thumb {
  width: 100%;
  height: 71%;
  background: #cdcdcd;
}

/* status bar */
.status {
  display: flex;
  align-items: center;
  gap: 7px;
  height: 24px;
  padding: 0 4px 0 14px;
  color: #2b3b52;
}
.count {
  margin-right: 14px;
}
.views {
  margin-left: auto;
  display: flex;
}
.views button {
  width: 22px;
  height: 22px;
  display: flex;
  align-items: center;
  justify-content: center;
  border: 1px solid transparent;
}
.views .on {
  background: #cbe8f9;
  border-color: #3ba0d3;
}

/* taskbar */
.taskbar {
  height: 40px;
  display: flex;
  align-items: stretch;
  gap: 3px;
  background: rgba(143, 124, 76, 0.62);
  border-top: 1px solid rgba(110, 90, 50, 0.4);
  color: #fff;
}
.start {
  width: 49px;
}
.task {
  width: 59px;
  background: rgba(255, 240, 220, 0.22);
  border: 1px solid rgba(255, 235, 205, 0.5);
}
.task.active {
  background: rgba(255, 240, 215, 0.38);
  border-color: #fff3df;
}
.taskbar button {
  display: flex;
  align-items: center;
  justify-content: center;
}
.tray {
  margin-left: auto;
  display: flex;
  align-items: center;
  gap: 9px;
}
.tray svg:first-child {
  margin-right: 3px;
}
.clock {
  width: 82px;
  line-height: 17px;
  text-align: center;
  align-self: center;
}
```
